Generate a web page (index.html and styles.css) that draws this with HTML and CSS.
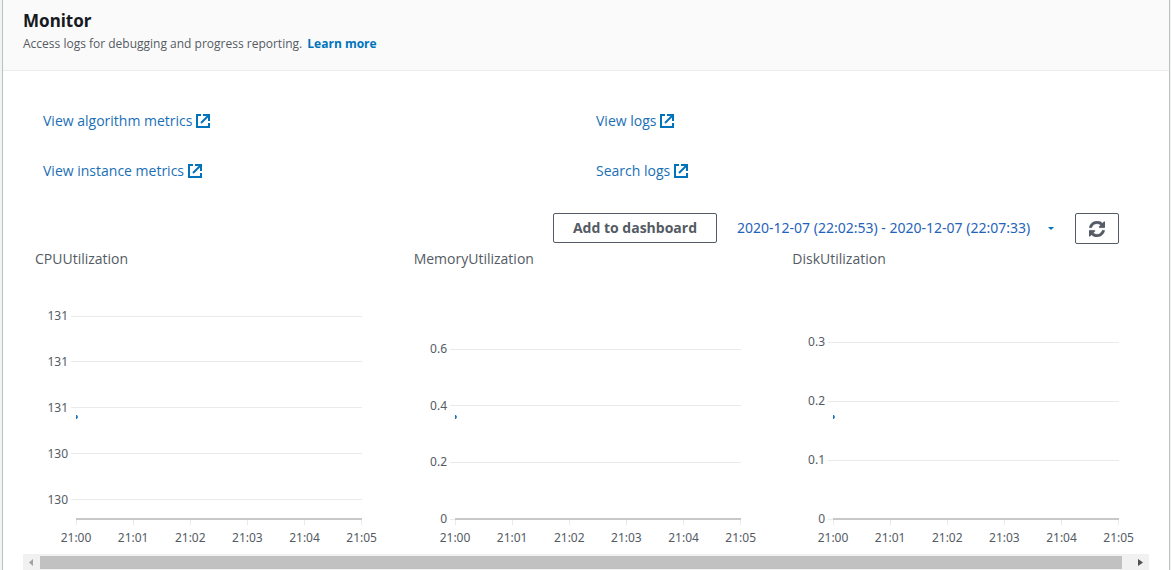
FILE: index.html
```html
<!DOCTYPE html>
<html lang="en">
<head>
<meta charset="utf-8">
<title>Monitor</title>
<link rel="stylesheet" href="styles.css">
</head>
<body>
<svg class="defs" width="0" height="0" aria-hidden="true">
  <symbol id="external" viewBox="0 0 14 14">
    <path d="M5 1H1v12h12V9" fill="none" stroke="currentColor" stroke-width="2"/>
    <path d="M12 2 5 9" fill="none" stroke="currentColor" stroke-width="2"/>
    <path d="M7 0h7v7h-2V3.500L10.500 2H7z" fill="currentColor"/>
  </symbol>
</svg>
<main class="panel">
  <header class="panel-header">
    <h2 class="title">Monitor</h2>
    <p class="description">Access logs for debugging and progress reporting. <a class="learn" href="#">Learn more</a></p>
  </header>
  <div class="panel-body">
    <nav class="links">
      <a class="link" href="#">View algorithm metrics<svg class="ext"><use href="#external"/></svg></a>
      <a class="link" href="#">View logs<svg class="ext"><use href="#external"/></svg></a>
      <a class="link" href="#">View instance metrics<svg class="ext"><use href="#external"/></svg></a>
      <a class="link" href="#">Search logs<svg class="ext"><use href="#external"/></svg></a>
    </nav>
    <div class="toolbar">
      <button class="button add" type="button">Add to dashboard</button>
      <button class="range" type="button">2020-12-07 (22:02:53) - 2020-12-07 (22:07:33)<span class="caret"></span></button>
      <button class="button refresh" type="button" aria-label="Refresh">
        <svg width="16" height="16" viewBox="0 0 1536 1536"><path fill="currentColor" stroke="currentColor" stroke-width="40" d="M1511 928q0 5-1 7-64 268-268 434.500T764 1536q-146 0-282.500-55T238 1324l-129 129q-19 19-45 19t-45-19-19-45V960q0-26 19-45t45-19h448q26 0 45 19t19 45-19 45l-137 137q71 66 161 102t187 36q134 0 250-65t186-179q11-17 53-117 8-23 30-23h192q13 0 22.500 9.500t9.500 22.500zm25-800v448q0 26-19 45t-45 19h-448q-26 0-45-19t-19-45 19-45l138-138Q969 256 768 256q-134 0-250 65T332 500q-11 17-53 117-8 23-30 23H50q-13 0-22.500-9.500T18 608v-7q65-268 270-434.500T768 0q146 0 284 55.500T1297 212l130-129q19-19 45-19t45 19 19 45z"/></svg>
      </button>
    </div>
    <div class="charts">
      <section class="chart">
        <h3 class="chart-title">CPUUtilization</h3>
        <svg class="plot">
          <g class="grid">
            <line x1="-5" x2="100%" y1="36.5" y2="36.5"/><line x1="-5" x2="100%" y1="81.5" y2="81.5"/><line x1="-5" x2="100%" y1="127.5" y2="127.5"/><line x1="-5" x2="100%" y1="173.5" y2="173.5"/><line x1="-5" x2="100%" y1="219.5" y2="219.5"/>
            <line x1="0" x2="0" y1="239" y2="245"/><line x1="20%" x2="20%" y1="239" y2="245"/><line x1="40%" x2="40%" y1="239" y2="245"/><line x1="60%" x2="60%" y1="239" y2="245"/><line x1="80%" x2="80%" y1="239" y2="245"/><line x1="100%" x2="100%" y1="239" y2="245"/>
          </g>
          <line class="axis" x1="0" x2="100%" y1="239" y2="239"/>
          <g class="y-labels"><text x="-8" y="40">131</text><text x="-8" y="86">131</text><text x="-8" y="132">131</text><text x="-8" y="178">130</text><text x="-8" y="224">130</text></g>
          <g class="x-labels"><text x="0" y="262">21:00</text><text x="20%" y="262">21:01</text><text x="40%" y="262">21:02</text><text x="60%" y="262">21:03</text><text x="80%" y="262">21:04</text><text x="100%" y="262">21:05</text></g>
          <path class="point" d="M0 135h1l1 2-1 2H0z"/>
        </svg>
      </section>
      <section class="chart">
        <h3 class="chart-title">MemoryUtilization</h3>
        <svg class="plot">
          <g class="grid">
            <line x1="-5" x2="100%" y1="69.5" y2="69.5"/><line x1="-5" x2="100%" y1="125.5" y2="125.5"/><line x1="-5" x2="100%" y1="182.5" y2="182.5"/><line x1="-5" x2="100%" y1="239.5" y2="239.5"/>
            <line x1="0" x2="0" y1="239" y2="245"/><line x1="20%" x2="20%" y1="239" y2="245"/><line x1="40%" x2="40%" y1="239" y2="245"/><line x1="60%" x2="60%" y1="239" y2="245"/><line x1="80%" x2="80%" y1="239" y2="245"/><line x1="100%" x2="100%" y1="239" y2="245"/>
          </g>
          <line class="axis" x1="0" x2="100%" y1="239" y2="239"/>
          <g class="y-labels"><text x="-8" y="73">0.6</text><text x="-8" y="130">0.4</text><text x="-8" y="186">0.2</text><text x="-8" y="243">0</text></g>
          <g class="x-labels"><text x="0" y="262">21:00</text><text x="20%" y="262">21:01</text><text x="40%" y="262">21:02</text><text x="60%" y="262">21:03</text><text x="80%" y="262">21:04</text><text x="100%" y="262">21:05</text></g>
          <path class="point" d="M0 135h1l1 2-1 2H0z"/>
        </svg>
      </section>
      <section class="chart">
        <h3 class="chart-title">DiskUtilization</h3>
        <svg class="plot">
          <g class="grid">
            <line x1="-5" x2="100%" y1="62.5" y2="62.5"/><line x1="-5" x2="100%" y1="121.5" y2="121.5"/><line x1="-5" x2="100%" y1="180.5" y2="180.5"/><line x1="-5" x2="100%" y1="239.5" y2="239.5"/>
            <line x1="0" x2="0" y1="239" y2="245"/><line x1="20%" x2="20%" y1="239" y2="245"/><line x1="40%" x2="40%" y1="239" y2="245"/><line x1="60%" x2="60%" y1="239" y2="245"/><line x1="80%" x2="80%" y1="239" y2="245"/><line x1="100%" x2="100%" y1="239" y2="245"/>
          </g>
          <line class="axis" x1="0" x2="100%" y1="239" y2="239"/>
          <g class="y-labels"><text x="-8" y="66">0.3</text><text x="-8" y="125">0.2</text><text x="-8" y="184">0.1</text><text x="-8" y="243">0</text></g>
          <g class="x-labels"><text x="0" y="262">21:00</text><text x="20%" y="262">21:01</text><text x="40%" y="262">21:02</text><text x="60%" y="262">21:03</text><text x="80%" y="262">21:04</text><text x="100%" y="262">21:05</text></g>
          <path class="point" d="M0 135h1l1 2-1 2H0z"/>
        </svg>
      </section>
    </div>
    <div class="scrollbar" aria-hidden="true">
      <svg class="arrow prev" viewBox="0 0 17 16"><path d="M10 5v7L6 8.500z"/></svg>
      <div class="thumb"></div>
      <svg class="arrow next" viewBox="0 0 17 16" preserveAspectRatio="xMaxYMid"><path d="M6 5v7l5-3.500z"/></svg>
    </div>
  </div>
</main>
</body>
</html>
```
FILE: styles.css
```css
* { box-sizing: border-box; }
body {
  margin: 0;
  background: #f2f3f3;
  color: #545b64;
  font: 14px/20px "Open Sans", "Noto Sans", sans-serif;
}
.defs { position: absolute; }
.panel {
  min-height: 100vh;
  margin: 0 1px 0 2px;
  border: solid #b9c2c2;
  border-width: 0 1px;
  background: #fff;
}
.panel-header {
  padding: 9px 20px 16px;
  border-bottom: 1px solid #eaeded;
  background: #fafafa;
}
.title {
  margin: 0;
  color: #16191f;
  font-family: "Noto Sans", sans-serif;
  font-size: 17px;
  line-height: 24px;
}
.description { margin: 0; padding-top: 1px; font-size: 12px; }
.learn {
  margin-left: 2px;
  color: #0073bb;
  font-weight: 700;
  text-decoration: none;
}
.panel-body { padding: 40px 20px 0; }
.links {
  display: grid;
  grid-template-columns: 1fr 1fr;
  row-gap: 30px;
  padding-left: 20px;
}
.link {
  display: flex;
  align-items: center;
  justify-self: start;
  gap: 4px;
  color: #1a6fb5;
  text-decoration: none;
}
.ext { width: 14px; height: 14px; color: #0073bb; }
.toolbar {
  display: flex;
  align-items: flex-start;
  justify-content: flex-end;
  padding: 32px 30px 0 0;
}
.button {
  height: 31px;
  border: 1px solid #545b64;
  border-radius: 2px;
  background: #fff;
  color: #545b64;
  font: inherit;
}
.add { width: 164px; height: 30px; padding: 0; font-weight: 700; }
.refresh {
  display: flex;
  align-items: center;
  justify-content: center;
  width: 44px;
  padding: 0;
}
.range {
  display: flex;
  align-items: center;
  justify-content: space-between;
  min-width: 317px;
  height: 30px;
  margin: 0 21px 0 20px;
  padding: 0;
  border: 0;
  background: none;
  color: #1f63bb;
  font: inherit;
  font-family: "Noto Sans", sans-serif;
}
.caret {
  border: solid transparent;
  border-width: 3px 3px 0;
  border-top-color: #0073bb;
}
.charts {
  display: grid;
  grid-template-columns: repeat(3, 1fr);
  gap: 52px;
  padding: 5px 30px 0 12px;
}
.chart-title { margin: 0; font-size: 14px; font-weight: 400; }
.chart { padding-bottom: 4px; }
.plot {
  display: block;
  width: calc(100% - 41px);
  height: 270px;
  margin: 11px 0 0 41px;
  overflow: visible;
}
.grid line { stroke: #eaeaea; shape-rendering: crispEdges; }
.axis { stroke: #c8c8c8; stroke-width: 2; shape-rendering: crispEdges; }
.plot text { fill: #545b64; font-family: "Noto Sans", sans-serif; font-size: 12px; }
.y-labels { text-anchor: end; }
.x-labels { text-anchor: middle; }
.point { fill: #1f77b4; }
.scrollbar { display: flex; height: 16px; background: #f1f1f1; }
.arrow { width: 17px; height: 16px; fill: #a3a3a3; }
.next { width: 27px; fill: #505050; }
.thumb { flex: 1; height: 13px; margin-top: 2px; background: #c1c1c1; }
```
